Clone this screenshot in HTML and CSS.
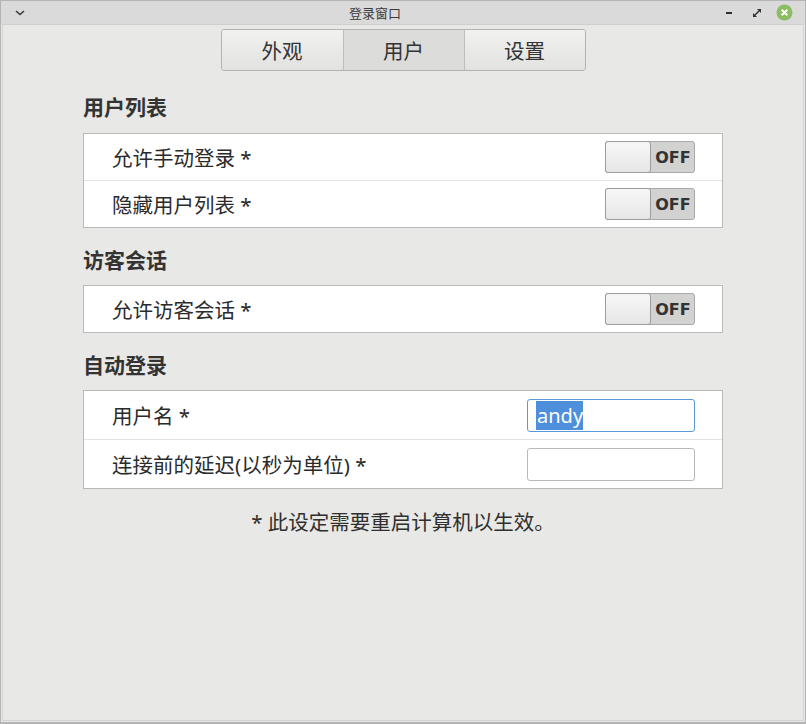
FILE: index.html
```html
<!DOCTYPE html>
<html lang="zh-CN">
<head>
<meta charset="utf-8">
<title>登录窗口</title>
<link rel="stylesheet" href="styles.css">
</head>
<body>
<div class="window">
  <div class="titlebar">
    <span class="tb-menu">
      <svg width="10" height="6" viewBox="0 0 10 6"><path d="M1 1 L5 4.5 L9 1" fill="none" stroke="#3a3a3a" stroke-width="1.6"/></svg>
    </span>
    <span class="tb-title">登录窗口</span>
    <span class="tb-buttons">
      <svg class="tb-min" width="10" height="10" viewBox="0 0 10 10"><rect x="2" y="4" width="6" height="2" fill="#2e2e2e"/></svg>
      <svg class="tb-max" width="10" height="10" viewBox="0 0 10 10"><path d="M5 1 H9 V5 Z M1 5 V9 H5 Z" fill="#2e2e2e"/><path d="M3 7 L7 3" stroke="#2e2e2e" stroke-width="1.4"/></svg>
      <svg class="tb-close" width="17" height="17" viewBox="0 0 17 17"><circle cx="8.5" cy="8.5" r="8" fill="#8bbd62"/><path d="M5.7 5.7 L11.3 11.3 M11.3 5.7 L5.7 11.3" stroke="#fff" stroke-width="2"/></svg>
    </span>
  </div>
  <div class="content">
    <div class="tabs">
      <div class="tab">外观</div>
      <div class="tab active">用户</div>
      <div class="tab">设置</div>
    </div>
    <div class="section">
      <h2 class="section-title">用户列表</h2>
      <div class="box">
        <div class="row">
          <span class="label">允许手动登录 *</span>
          <span class="switch"><span class="knob"></span><span class="state">OFF</span></span>
        </div>
        <div class="row">
          <span class="label">隐藏用户列表 *</span>
          <span class="switch"><span class="knob"></span><span class="state">OFF</span></span>
        </div>
      </div>
    </div>
    <div class="section">
      <h2 class="section-title">访客会话</h2>
      <div class="box">
        <div class="row">
          <span class="label">允许访客会话 *</span>
          <span class="switch"><span class="knob"></span><span class="state">OFF</span></span>
        </div>
      </div>
    </div>
    <div class="section">
      <h2 class="section-title">自动登录</h2>
      <div class="box">
        <div class="row row-input">
          <span class="label">用户名 *</span>
          <span class="entry focused"><span class="sel">andy</span></span>
        </div>
        <div class="row row-input">
          <span class="label">连接前的延迟(以秒为单位) *</span>
          <span class="entry"></span>
        </div>
      </div>
    </div>
    <p class="note">* 此设定需要重启计算机以生效。</p>
  </div>
</div>
</body>
</html>
```

FILE: styles.css
```css
* { box-sizing: border-box; }
html, body {
  margin: 0;
  padding: 0;
  width: 806px;
  height: 724px;
  overflow: hidden;
  background: #e8e8e6;
}
body {
  font-family: "Noto Sans", "Noto Sans CJK SC", sans-serif;
  color: #2f2f2f;
}
.window {
  width: 806px;
  height: 724px;
  border: 1px solid #b4b4b4;
  border-bottom-width: 2px;
  display: flex;
  flex-direction: column;
  background: #e8e8e6;
}
.titlebar {
  height: 23px;
  flex: none;
  background: #dadada;
  display: flex;
  align-items: center;
  position: relative;
}
.tb-menu {
  width: 36px;
  display: flex;
  justify-content: center;
  padding-top: 1px;
  padding-left: 2px;
}
.tb-title {
  position: absolute;
  left: 0;
  right: 56px;
  text-align: center;
  font-size: 13px;
  color: #3a3a3a;
  line-height: 23px;
  font-family: "Noto Sans CJK SC", sans-serif;
  pointer-events: none;
}
.tb-buttons {
  margin-left: auto;
  display: flex;
  align-items: center;
  padding-right: 12px;
}
.tb-min { margin-right: 18px; }
.tb-max { margin-right: 14px; }
.content {
  flex: 1;
  border: 1px solid #d2d2d0;
  border-top: 1px solid #cfcfcf;
  margin: 0 1px 1px 1px;
  padding: 4px 80px 0 80px;
  display: flex;
  flex-direction: column;
}
.tabs {
  align-self: center;
  display: flex;
  border: 1px solid #b3b3b3;
  border-radius: 3px;
  overflow: hidden;
  height: 42px;
}
.tab {
  width: 121px;
  display: flex;
  align-items: center;
  justify-content: center;
  font-size: 20.5px;
  color: #333;
  background: linear-gradient(#f1f1f0, #e2e2e1);
  font-family: "Noto Sans CJK SC", sans-serif;
}
.tab + .tab { border-left: 1px solid #bdbdbd; }
.tab.active { background: #dcdcdb; }
.section-title {
  margin: 0;
  font-size: 21px;
  font-weight: bold;
  color: #333;
  line-height: 30px;
  font-family: "Noto Sans CJK SC", sans-serif;
  padding: 20px 0 12px 0;
}
.section + .section .section-title { padding-top: 16px; padding-bottom: 11px; }
.box {
  background: #fff;
  border: 1px solid #b9b9b9;
}
.row {
  height: 46px;
  display: flex;
  align-items: center;
  justify-content: space-between;
  padding: 0 27px 0 28px;
}
.row + .row { border-top: 1px solid #e2e2e2; height: 47px; }
.row-input { height: 48px; }
.row-input + .row-input { height: 49px; }
.label {
  font-size: 20.5px;
  color: #2b2b2b;
}
.switch {
  width: 90px;
  height: 32px;
  border: 1px solid #a8a8a8;
  border-radius: 3px;
  background: #d2d2d1;
  display: flex;
  align-items: center;
}
.knob {
  width: 46px;
  height: 32px;
  margin: -1px 0 -1px -1px;
  border: 1px solid #9c9c9c;
  border-radius: 3px;
  background: linear-gradient(#f7f7f7, #e6e6e6);
}
.state {
  flex: 1;
  text-align: center;
  font-size: 16px;
  font-weight: bold;
  color: #333;
  font-family: "DejaVu Sans", sans-serif;
  padding-left: 1px;
}
.entry {
  width: 168px;
  height: 33px;
  border: 1px solid #b9b9b9;
  border-radius: 3px;
  background: #fff;
  display: flex;
  align-items: center;
  padding-left: 8px;
}
.entry.focused { border-color: #5b97dc; }
.sel {
  background: #4d8fdb;
  color: #fff;
  font-size: 20px;
  line-height: 29px;
  padding: 0 0 0 1px;
}
.note {
  margin: 18px 0 0 0;
  text-align: center;
  font-size: 20.5px;
  line-height: 30px;
  color: #2f2f2f;
  font-family: "Noto Sans", "Noto Sans CJK SC", sans-serif;
}
```
